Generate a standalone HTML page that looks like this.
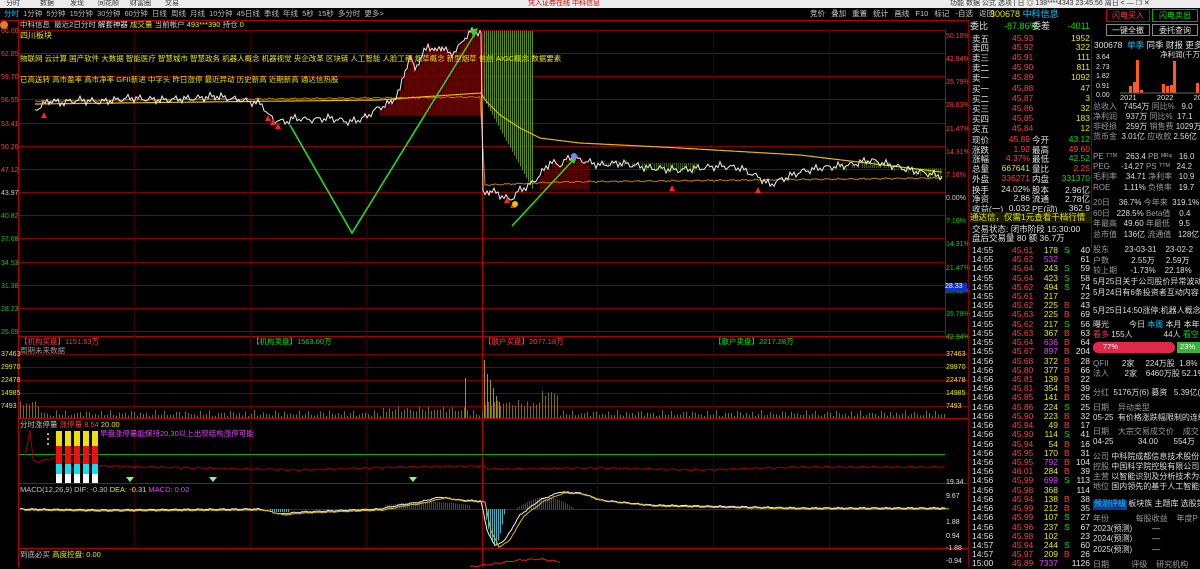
<!DOCTYPE html>
<html><head><meta charset="utf-8">
<style>
*{margin:0;padding:0;box-sizing:border-box}
body{width:1200px;height:567px;overflow:hidden;background:#000;font-family:"Liberation Sans","Noto Sans CJK SC",sans-serif;font-size:8px;color:#c0c0c0;position:relative}
.a{position:absolute;white-space:nowrap;line-height:1}
.r{color:#ff3b3b}.g{color:#00e000}.y{color:#e8e800}.w{color:#e0e0e0}.p{color:#e040fb}.c{color:#00c8ff}.gr{color:#9a9a9a}
#top{position:absolute;left:0;top:0;width:1200px;height:8px;background:#ececec;color:#333;font-size:7px}
.tr{position:absolute;left:972px;width:118px;height:9px;font-size:8.5px}
.tr span{position:absolute;top:0}
</style></head><body>
<div id="top">
<span class="a" style="left:6px;top:0">分时</span><span class="a" style="left:40px;top:0">数据</span><span class="a" style="left:70px;top:0">发现</span><span class="a" style="left:98px;top:0">同花顺</span><span class="a" style="left:130px;top:0">财富圈</span><span class="a" style="left:165px;top:0">交易</span>
<span class="a" style="left:528px;top:0;color:#d00">凭入证券在线 中科信息</span>
<span class="a" style="left:950px;top:0">功能 数据 公式 选项 | 日 ◎ 138****4343 23:45:56 周日 &lt; — ❐ ✕</span>
</div>
<div class="a" style="left:4px;top:10px;font-size:7.5px;color:#bbb;word-spacing:2px"><span class="c">分时</span> 1分钟 5分钟 15分钟 30分钟 60分钟 日线 周线 月线 10分钟 45日线 季线 年线 5秒 15秒 多分时 更多&gt;</div>
<div class="a" style="left:810px;top:10px;font-size:7.5px;color:#ccc;word-spacing:4px">竞价 叠加 重置 统计 画线 F10 标记 -自选 返回</div>
<div class="a" style="left:20px;top:21px;font-size:7.5px;color:#ccc">中科信息 &nbsp;最近2日分时 <span class="w">解套神器</span> <span class="y">成交量</span> 当前帐户 <span class="y">493***390</span> 持仓 <span class="y">0</span></div>
<div class="a" style="left:0;top:21px;width:8px;height:8px;border-radius:4px;background:#e08020"></div>

<svg id="ch" width="968" height="567" style="position:absolute;left:0;top:0">
<g id="grid"></g>
<g id="fill"></g>
<g id="lines"></g>
</svg>

<div class="a y" style="left:20px;top:32px">四川板块</div>
<div class="a y" style="left:20px;top:55px;font-size:7.5px">物联网 云计算 国产软件 大数据 智能医疗 智慧城市 智慧政务 机器人概念 机器视觉 央企改革 区块链 人工智能 人脸工程 烟草概念 新型烟草 信创 AIGC概念 数据要素</div>
<div class="a y" style="left:20px;top:76px;font-size:7.5px">已高送转 高市盈率 高市净率 GFII新进 中字头 昨日涨停 最近异动 历史新高 近期新高 通达信热股</div>
<div class="a r" style="left:20px;top:338px;font-size:7.5px">【机构买盘】1151.53万</div>
<div class="a gr" style="left:20px;top:347px;font-size:7.5px">周期未来数据</div>
<div class="a g" style="left:252px;top:338px;font-size:7.5px">【机构卖盘】1563.00万</div>
<div class="a r" style="left:484px;top:338px;font-size:7.5px">【散户买盘】2077.18万</div>
<div class="a g" style="left:714px;top:338px;font-size:7.5px">【散户卖盘】2217.28万</div>
<div class="a" style="left:20px;top:421px;font-size:7.5px">分时涨停量 <span class="r">涨停量</span> <span class="r">8.54</span> <span class="y">20.00</span></div>
<div class="a p" style="left:100px;top:430px;font-size:7.5px">早盘涨停量能保持20,30以上出现结构涨停可能</div>
<div class="a" style="left:20px;top:486px;font-size:7.5px">MACD(12,26,9) DIF: -0.30 <span class="y">DEA: -0.31</span> <span class="p">MACD: 0.02</span></div>
<div class="a" style="left:20px;top:551px;font-size:7.5px">到底必买 <span class="y">高度控盘: 0.00</span></div>
<div id="axl"></div>

<div class="a" style="left:990px;top:10px;font-size:9px"><span class="y">300678</span> <span class="c">中科信息</span></div>
<div class="a r" style="left:1106px;top:9px;width:44px;height:13px;border:1px solid #c00;text-align:center;padding-top:2px">闪电买入</div>
<div class="a g" style="left:1152px;top:9px;width:46px;height:13px;border:1px solid #0a0;text-align:center;padding-top:2px">闪电卖出</div>
<div class="a w" style="left:1106px;top:24px;width:44px;height:12px;border:1px solid #888;text-align:center;padding-top:2px">一键全撤</div>
<div class="a w" style="left:1152px;top:24px;width:46px;height:12px;border:1px solid #888;text-align:center;padding-top:2px">委托查询</div>

<div style="position:absolute;left:968px;top:20px;width:1px;height:547px;background:#800"></div>
<div style="position:absolute;left:1091px;top:38px;width:1px;height:210px;background:#800"></div>

<div class="a w" style="left:1094px;top:41px;font-size:8.5px">300678 &nbsp;<span class="c">单季</span> 同季 财报 更多</div>
<div class="a w" style="left:1160px;top:51px;font-size:7.5px">净利润(千万)</div>
<div class="a w" style="left:1096px;top:53px;font-size:7px;line-height:9.6px">3.64<br>2.73<br>1.82<br>0.91<br>0.00</div>
<svg style="position:absolute;left:1092px;top:56px" width="108" height="40">
<rect x="37" y="30" width="3" height="7" fill="#ff5a1a"/><rect x="41" y="26" width="3" height="11" fill="#ff5a1a"/><rect x="44" y="4" width="3" height="33" fill="#ff5a1a"/><rect x="48" y="34" width="3" height="3" fill="#ff5a1a"/>
<rect x="70" y="28" width="3" height="9" fill="#ff5a1a"/><rect x="74" y="30" width="3" height="7" fill="#ff5a1a"/><rect x="78" y="29" width="3" height="8" fill="#ff5a1a"/><rect x="81" y="5" width="3" height="32" fill="#ff5a1a"/>
<rect x="104" y="27" width="3" height="10" fill="#ff5a1a"/><line x1="28" y1="37" x2="108" y2="37" stroke="#666"/></svg>
<div class="a w" style="left:1120px;top:94px;font-size:7.5px;word-spacing:18px">2021 2022 2023</div>
<div class="a" style="left:1093px;top:342px;width:82px;height:11px;background:#e0284a;border-radius:5px;color:#fff;font-size:7.5px;padding:1px 0 0 10px">77%</div>
<div class="a" style="left:1177px;top:342px;width:23px;height:11px;background:#3bb33b;color:#fff;font-size:7.5px;padding:1px 0 0 3px">23%</div>
<div class="a" style="left:1093px;top:500px;width:34px;height:10px;background:#123a8a"></div>
<script>
var s='http://www.w3.org/2000/svg';
function el(p,t,a){var e=document.createElementNS(s,t);for(var k in a)e.setAttribute(k,a[k]);p.appendChild(e);return e}
var G=document.getElementById('grid'),F=document.getElementById('fill'),L=document.getElementById('lines');
var hs=[];for(var i=0;i<14;i++)hs.push(Math.round(30+i*23.15)+0.5);
hs.forEach(function(y){el(G,'line',{x1:18,y1:y,x2:945,y2:y,stroke:'#8a0000','stroke-width':1})});
[336,354,367,380,393,406,418,483,548].forEach(function(y){el(G,'line',{x1:18,y1:y+0.5,x2:968,y2:y+0.5,stroke:y==336||y==418||y==483||y==548?'#b00000':'#7a0000'})});
el(G,'line',{x1:0,y1:20.5,x2:968,y2:20.5,stroke:'#b00000'});
[134,250,366,597,713,829].forEach(function(x){el(G,'line',{x1:x+0.5,y1:30,x2:x+0.5,y2:548,stroke:'#3a0000'})});
el(G,'line',{x1:18.5,y1:20,x2:18.5,y2:567,stroke:'#b00000'});el(G,'line',{x1:482.5,y1:30,x2:482.5,y2:567,stroke:'#b00000'});el(G,'line',{x1:945.5,y1:30,x2:945.5,y2:336,stroke:'#b00000'});
var lv=['66.00','62.85','59.70','56.55','53.41','50.26','47.12','43.97','40.82','37.68','34.53','31.38','28.23','25.09'];
var rv=['50.10%','42.94%','35.79%','28.63%','21.47%','14.31%','7.16%','0.00%','7.16%','14.31%','21.47%','28.63%','35.79%','42.94%'];
var ax=document.getElementById('axl'),h='';
for(i=0;i<14;i++){var c=i<7?'#ff3b3b':(i==7?'#ccc':'#00d000');h+='<div class="a" style="left:1px;top:'+(hs[i]-3)+'px;font-size:7px;color:'+c+'">'+lv[i]+'</div><div class="a" style="left:946px;top:'+(hs[i]+2)+'px;font-size:7px;color:'+c+'">'+rv[i]+'</div>';}
var vl=[['37463',354],['29970',367],['22478',380],['14985',393],['7493',406]];
vl.forEach(function(v){h+='<div class="a y" style="left:1px;top:'+(v[1]-3)+'px;font-size:7px">'+v[0]+'</div><div class="a y" style="left:946px;top:'+(v[1]-3)+'px;font-size:7px">'+v[0]+'</div>'});
h+='<div class="a w" style="left:946px;top:479px;font-size:7px">19.34</div><div class="a w" style="left:946px;top:493px;font-size:7px">9.67</div><div class="a w" style="left:946px;top:519px;font-size:7px">1.88</div><div class="a w" style="left:946px;top:533px;font-size:7px">0.94</div><div class="a w" style="left:946px;top:558px;font-size:7px">-0.94</div><div class="a w" style="left:946px;top:545px;font-size:7px">-1.88</div><div class="a" style="left:945px;top:283px;width:22px;height:9px;background:#1030d0;color:#fff;font-size:7px">28.33</div>';
ax.innerHTML=h;
var P=[[35,110],[50,100],[60,103],[80,100],[100,102],[130,98],[160,100],[200,98],[215,96],[240,100],[262,104],[268,115],[275,120],[285,122],[295,118],[310,120],[330,118],[350,122],[365,118],[375,110],[385,105],[392,102],[400,90],[405,70],[410,58],[415,68],[420,60],[428,45],[435,52],[442,46],[450,55],[458,48],[465,38],[470,32],[481,32],[483,195],[490,190],[500,195],[510,200],[520,190],[530,185],[540,175],[550,162],[560,165],[570,157],[580,160],[600,165],[620,163],[650,168],[680,170],[700,168],[720,166],[740,168],[760,178],[770,185],[780,180],[800,172],[820,168],[850,165],[870,160],[890,165],[910,170],[930,174],[942,176]];
function interp(pts,jit){var o=[];for(var k=0;k<pts.length-1;k++){var a=pts[k],b=pts[k+1];for(var x=a[0];x<b[0];x+=2){var t=(x-a[0])/(b[0]-a[0]);o.push([x,a[1]+(b[1]-a[1])*t+(jit?Math.sin(x*1.7)*jit+Math.sin(x*0.53)*jit:0)])}}o.push(pts[pts.length-1]);return o}
var pp=interp(P,2.2);
var A=[[35,104],[200,102],[380,100],[420,97],[481,93],[485,100],[500,115],[520,128],[540,138],[580,143],[680,148],[800,155],[942,172]];
var ap=interp(A,0);
function yAt(arr,x){for(var k=0;k<arr.length-1;k++)if(arr[k+1][0]>=x)return arr[k][1];return arr[arr.length-1][1]}
for(var x=380;x<481;x+=2){var py=yAt(pp,x);el(F,'line',{x1:x+.5,y1:py,x2:x+.5,y2:Math.max(py,116),stroke:'#6a0000'})}
for(x=484;x<533;x+=2){var y2=100+(x-484)*1.85;el(F,'line',{x1:x+.5,y1:31,x2:x+.5,y2:y2,stroke:'#5e8a00'})}
for(x=540;x<590;x+=2){el(F,'line',{x1:x+.5,y1:yAt(pp,x),x2:x+.5,y2:190,stroke:'#5a0000'})}
for(x=600;x<700;x+=2){el(F,'line',{x1:x+.5,y1:163,x2:x+.5,y2:yAt(pp,x),stroke:'#3a5a00'})}
for(x=840;x<942;x+=2){el(F,'line',{x1:x+.5,y1:168,x2:x+.5,y2:yAt(pp,x)+2,stroke:'#3a5a00'})}
function pl(arr,c,w){el(L,'polyline',{points:arr.map(function(p){return p[0]+','+p[1].toFixed(1)}).join(' '),fill:'none',stroke:c,'stroke-width':w||1})}
pl(interp([[35,101],[480,97],[485,185],[560,182],[942,178]],0.5),'#c08000',1);
pl(ap,'#e0c000',1.2);
pl(pp,'#f0f0f0',1);
pl([[290,125],[352,233],[476,32]],'#22dd22',1.6);
pl([[512,226],[575,158]],'#22dd22',1.6);
el(L,'polygon',{points:'470,30 478,28 474,38',fill:'#22dd22'});el(L,'polygon',{points:'570,160 578,155 574,164',fill:'#22dd22'});
[[44,115],[268,118],[273,122],[278,126],[672,188],[758,190],[507,200],[513,205]].forEach(function(p){el(L,'polygon',{points:(p[0]-3)+','+(p[1]+3)+' '+(p[0]+3)+','+(p[1]+3)+' '+p[0]+','+(p[1]-3),fill:'#ff2020'})});
el(L,'circle',{cx:515,cy:204,r:3,fill:'#e8c000'});el(L,'circle',{cx:574,cy:156,r:3,fill:'#8080ff'});
for(x=20;x<945;x+=3){var hh=2+Math.abs(Math.sin(x*0.7)*3+Math.sin(x*0.13)*3);if(x<40)hh+=10;if(x>380&&x<470)hh+=4;if(x>484&&x<560)hh+=10;if(x>540&&x<560)hh+=10;el(L,'line',{x1:x+.5,y1:418,x2:x+.5,y2:418-hh,stroke:'#7a7000'})}
[[465,40],[484,58],[487,44],[490,38],[493,30],[496,22],[499,16]].forEach(function(v){el(L,'line',{x1:v[0]+.5,y1:418,x2:v[0]+.5,y2:418-v[1],stroke:'#a09a00'})});
el(L,'line',{x1:19,y1:454.5,x2:945,y2:454.5,stroke:'#00b000'});
pl(interp([[25,455],[30,430],[33,460],[36,462],[45,460],[55,458],[100,466],[200,468],[300,470],[400,467],[482,466],[490,469],[600,468],[700,470],[800,467],[945,467]],0.6),'#a00000',1);
for(var k=0;k<5;k++){var bx=56+k*9;el(L,'rect',{x:bx,y:431,width:6,height:15,fill:'#f0e000'});el(L,'rect',{x:bx,y:446,width:6,height:18,fill:'#ee1010'});el(L,'rect',{x:bx,y:464,width:6,height:10,fill:'#10e0f0'});el(L,'rect',{x:bx,y:474,width:6,height:9,fill:'#fff'})}
[[48,434],[48,439],[48,444]].forEach(function(p){el(L,'circle',{cx:p[0],cy:p[1],r:1,fill:'#ff0'})});
[130,213,413].forEach(function(x){el(L,'polygon',{points:(x-4)+',477 '+(x+4)+',477 '+x+',482',fill:'#80ff80'})});
el(L,'line',{x1:19,y1:509.5,x2:945,y2:509.5,stroke:'#303030'});
for(x=270;x<290;x+=2)el(L,'line',{x1:x+.5,y1:509,x2:x+.5,y2:512,stroke:'#40b0c0'});
for(x=385;x<470;x+=2)el(L,'line',{x1:x+.5,y1:509,x2:x+.5,y2:505-Math.sin((x-385)/85*3.14)*3,stroke:'#a02020'});
for(x=484;x<505;x+=2)el(L,'line',{x1:x+.5,y1:509,x2:x+.5,y2:509+Math.sin((x-484)/21*3.14)*36,stroke:'#40b0c0'});
for(x=515;x<575;x+=2)el(L,'line',{x1:x+.5,y1:509,x2:x+.5,y2:509-Math.sin((x-515)/60*3.14)*12,stroke:'#a02020'});
var M=[[20,509],[100,510],[260,509],[280,514],[300,512],[380,509],[400,505],[420,502],[440,497],[460,500],[481,501],[487,530],[495,546],[505,540],[520,515],[540,500],[560,492],[580,493],[600,500],[650,505],[700,506],[800,508],[945,508]];
pl(interp(M,0.4),'#f0f0f0',1);pl(interp(M.map(function(p){return [p[0]+4,p[1]+1]}),0.3),'#e0c000',1);
pl(interp([[470,567],[500,563],[520,560],[540,559],[560,562]],0.6),'#e02020',1);
</script>

<div class="a" style="left:970px;top:22px;font-size:9px;width:120px"><span class="w">委比</span><span class="g" style="position:absolute;left:34px">-87.86%</span><span class="w" style="position:absolute;left:62px">委差</span><span class="g" style="position:absolute;right:0">-4011</span></div>

<div style="font-size:8.5px">
<div class="tr" style="top:33px"><span class="w">卖五</span><span class="r" style="left:40px">45.93</span><span class="y" style="right:0">1952</span></div>
<div class="tr" style="top:42px"><span class="w">卖四</span><span class="r" style="left:40px">45.92</span><span class="y" style="right:0">322</span></div>
<div class="tr" style="top:52px"><span class="w">卖三</span><span class="r" style="left:40px">45.91</span><span class="y" style="right:0">111</span></div>
<div class="tr" style="top:62px"><span class="w">卖二</span><span class="r" style="left:40px">45.90</span><span class="y" style="right:0">811</span></div>
<div class="tr" style="top:72px"><span class="w">卖一</span><span class="r" style="left:40px">45.89</span><span class="y" style="right:0">1092</span></div>
<div class="tr" style="top:83px"><span class="w">买一</span><span class="r" style="left:40px">45.88</span><span class="y" style="right:0">47</span></div>
<div class="tr" style="top:93px"><span class="w">买二</span><span class="r" style="left:40px">45.87</span><span class="y" style="right:0">3</span></div>
<div class="tr" style="top:103px"><span class="w">买三</span><span class="r" style="left:40px">45.86</span><span class="y" style="right:0">32</span></div>
<div class="tr" style="top:113px"><span class="w">买四</span><span class="r" style="left:40px">45.85</span><span class="y" style="right:0">183</span></div>
<div class="tr" style="top:123px"><span class="w">买五</span><span class="r" style="left:40px">45.84</span><span class="y" style="right:0">12</span></div>
<div class="tr" style="top:134px"><span class="w">现价</span><span class="r" style="right:60px">45.89</span><span class="w" style="left:60px">今开</span><span class="g" style="right:0">43.12</span></div>
<div class="tr" style="top:144px"><span class="w">涨跌</span><span class="r" style="right:60px">1.92</span><span class="w" style="left:60px">最高</span><span class="r" style="right:0">49.60</span></div>
<div class="tr" style="top:153px"><span class="w">涨幅</span><span class="r" style="right:60px">4.37%</span><span class="w" style="left:60px">最低</span><span class="g" style="right:0">42.52</span></div>
<div class="tr" style="top:163px"><span class="w">总量</span><span class="y" style="right:60px">667641</span><span class="w" style="left:60px">量比</span><span class="r" style="right:0">2.25</span></div>
<div class="tr" style="top:173px"><span class="w">外盘</span><span class="r" style="right:60px">336271</span><span class="w" style="left:60px">内盘</span><span class="g" style="right:0">331370</span></div>
<div class="tr" style="top:184px"><span class="w">换手</span><span class="w" style="right:60px">24.02%</span><span class="w" style="left:60px">股本</span><span class="w" style="right:0">2.96亿</span></div>
<div class="tr" style="top:193px"><span class="w">净资</span><span class="w" style="right:60px">2.86</span><span class="w" style="left:60px">流通</span><span class="w" style="right:0">2.78亿</span></div>
<div class="tr" style="top:203px"><span class="w">收益(一)</span><span class="w" style="right:60px">0.032</span><span class="w" style="left:60px">PE(动)</span><span class="w" style="right:0">362.9</span></div>
<div class="a y" style="left:970px;top:212px;width:121px;height:11px;background:#1c1c00;font-size:8.5px;padding-top:1px">通达信，仅需1元查看千档行情</div>
<div class="a w" style="left:972px;top:225px;font-size:8.5px">交易状态: 闭市阶段 15:30:00</div>
<div class="a w" style="left:972px;top:234px;font-size:8.5px">盘后交易量 80 额 36.7万</div>
</div>

<div id="ticks" style="font-size:8px">
<div class="tr" style="top:245px"><span class="w">14:55</span><span class="r" style="left:40px">45.61</span><span class="y" style="right:32px">178</span><span class="g" style="left:92px">S</span><span class="w" style="right:0">40</span></div>
<div class="tr" style="top:254px"><span class="w">14:55</span><span class="r" style="left:40px">45.62</span><span class="p" style="right:32px">532</span><span class="w" style="right:0">61</span></div>
<div class="tr" style="top:263px"><span class="w">14:55</span><span class="r" style="left:40px">45.64</span><span class="y" style="right:32px">243</span><span class="g" style="left:92px">S</span><span class="w" style="right:0">59</span></div>
<div class="tr" style="top:273px"><span class="w">14:55</span><span class="r" style="left:40px">45.64</span><span class="y" style="right:32px">423</span><span class="g" style="left:92px">S</span><span class="w" style="right:0">58</span></div>
<div class="tr" style="top:282px"><span class="w">14:55</span><span class="r" style="left:40px">45.62</span><span class="y" style="right:32px">494</span><span class="g" style="left:92px">S</span><span class="w" style="right:0">74</span></div>
<div class="tr" style="top:291px"><span class="w">14:55</span><span class="r" style="left:40px">45.61</span><span class="y" style="right:32px">217</span><span class="w" style="right:0">22</span></div>
<div class="tr" style="top:300px"><span class="w">14:55</span><span class="r" style="left:40px">45.62</span><span class="y" style="right:32px">225</span><span class="r" style="left:92px">B</span><span class="w" style="right:0">43</span></div>
<div class="tr" style="top:309px"><span class="w">14:55</span><span class="r" style="left:40px">45.63</span><span class="y" style="right:32px">225</span><span class="r" style="left:92px">B</span><span class="w" style="right:0">69</span></div>
<div class="tr" style="top:319px"><span class="w">14:55</span><span class="r" style="left:40px">45.62</span><span class="y" style="right:32px">217</span><span class="g" style="left:92px">S</span><span class="w" style="right:0">56</span></div>
<div class="tr" style="top:328px"><span class="w">14:55</span><span class="r" style="left:40px">45.63</span><span class="y" style="right:32px">367</span><span class="r" style="left:92px">B</span><span class="w" style="right:0">63</span></div>
<div class="tr" style="top:337px"><span class="w">14:55</span><span class="r" style="left:40px">45.64</span><span class="p" style="right:32px">636</span><span class="r" style="left:92px">B</span><span class="w" style="right:0">64</span></div>
<div class="tr" style="top:346px"><span class="w">14:55</span><span class="r" style="left:40px">45.67</span><span class="p" style="right:32px">897</span><span class="r" style="left:92px">B</span><span class="w" style="right:0">204</span></div>
<div class="tr" style="top:356px"><span class="w">14:56</span><span class="r" style="left:40px">45.68</span><span class="y" style="right:32px">372</span><span class="r" style="left:92px">B</span><span class="w" style="right:0">28</span></div>
<div class="tr" style="top:365px"><span class="w">14:56</span><span class="r" style="left:40px">45.80</span><span class="y" style="right:32px">377</span><span class="r" style="left:92px">B</span><span class="w" style="right:0">66</span></div>
<div class="tr" style="top:374px"><span class="w">14:56</span><span class="r" style="left:40px">45.81</span><span class="y" style="right:32px">139</span><span class="r" style="left:92px">B</span><span class="w" style="right:0">22</span></div>
<div class="tr" style="top:383px"><span class="w">14:56</span><span class="r" style="left:40px">45.81</span><span class="y" style="right:32px">354</span><span class="r" style="left:92px">B</span><span class="w" style="right:0">39</span></div>
<div class="tr" style="top:392px"><span class="w">14:56</span><span class="r" style="left:40px">45.85</span><span class="y" style="right:32px">141</span><span class="r" style="left:92px">B</span><span class="w" style="right:0">26</span></div>
<div class="tr" style="top:402px"><span class="w">14:56</span><span class="r" style="left:40px">45.86</span><span class="y" style="right:32px">224</span><span class="g" style="left:92px">S</span><span class="w" style="right:0">25</span></div>
<div class="tr" style="top:411px"><span class="w">14:56</span><span class="r" style="left:40px">45.90</span><span class="y" style="right:32px">223</span><span class="r" style="left:92px">B</span><span class="w" style="right:0">32</span></div>
<div class="tr" style="top:420px"><span class="w">14:56</span><span class="r" style="left:40px">45.94</span><span class="y" style="right:32px">49</span><span class="r" style="left:92px">B</span><span class="w" style="right:0">17</span></div>
<div class="tr" style="top:429px"><span class="w">14:56</span><span class="r" style="left:40px">45.90</span><span class="y" style="right:32px">114</span><span class="g" style="left:92px">S</span><span class="w" style="right:0">41</span></div>
<div class="tr" style="top:439px"><span class="w">14:56</span><span class="r" style="left:40px">45.94</span><span class="y" style="right:32px">54</span><span class="r" style="left:92px">B</span><span class="w" style="right:0">16</span></div>
<div class="tr" style="top:448px"><span class="w">14:56</span><span class="r" style="left:40px">45.95</span><span class="y" style="right:32px">170</span><span class="r" style="left:92px">B</span><span class="w" style="right:0">31</span></div>
<div class="tr" style="top:457px"><span class="w">14:56</span><span class="r" style="left:40px">45.95</span><span class="p" style="right:32px">792</span><span class="r" style="left:92px">B</span><span class="w" style="right:0">104</span></div>
<div class="tr" style="top:466px"><span class="w">14:56</span><span class="r" style="left:40px">46.01</span><span class="y" style="right:32px">284</span><span class="r" style="left:92px">B</span><span class="w" style="right:0">39</span></div>
<div class="tr" style="top:475px"><span class="w">14:56</span><span class="r" style="left:40px">45.99</span><span class="p" style="right:32px">699</span><span class="g" style="left:92px">S</span><span class="w" style="right:0">113</span></div>
<div class="tr" style="top:485px"><span class="w">14:56</span><span class="r" style="left:40px">45.98</span><span class="y" style="right:32px">368</span><span class="w" style="right:0">114</span></div>
<div class="tr" style="top:494px"><span class="w">14:56</span><span class="r" style="left:40px">45.94</span><span class="y" style="right:32px">138</span><span class="r" style="left:92px">B</span><span class="w" style="right:0">38</span></div>
<div class="tr" style="top:503px"><span class="w">14:56</span><span class="r" style="left:40px">45.99</span><span class="y" style="right:32px">212</span><span class="r" style="left:92px">B</span><span class="w" style="right:0">35</span></div>
<div class="tr" style="top:512px"><span class="w">14:56</span><span class="r" style="left:40px">45.99</span><span class="y" style="right:32px">107</span><span class="g" style="left:92px">S</span><span class="w" style="right:0">27</span></div>
<div class="tr" style="top:522px"><span class="w">14:56</span><span class="r" style="left:40px">45.96</span><span class="y" style="right:32px">237</span><span class="g" style="left:92px">S</span><span class="w" style="right:0">67</span></div>
<div class="tr" style="top:531px"><span class="w">14:56</span><span class="r" style="left:40px">45.98</span><span class="y" style="right:32px">102</span><span class="w" style="right:0">23</span></div>
<div class="tr" style="top:540px"><span class="w">14:57</span><span class="r" style="left:40px">45.94</span><span class="y" style="right:32px">244</span><span class="g" style="left:92px">S</span><span class="w" style="right:0">60</span></div>
<div class="tr" style="top:549px"><span class="w">14:57</span><span class="r" style="left:40px">45.97</span><span class="y" style="right:32px">209</span><span class="r" style="left:92px">B</span><span class="w" style="right:0">26</span></div>
<div class="tr" style="top:558px"><span class="w">15:00</span><span class="r" style="left:40px">45.89</span><span class="p" style="right:32px">7337</span><span class="w" style="right:0">1126</span></div>
</div>

<div style="font-size:8px;color:#ddd">
<div class="a" style="left:1093px;top:103px"><span class="gr">总收入</span> &nbsp;&nbsp;7454万 <span class="gr">同比%</span> &nbsp;&nbsp;9.0</div>
<div class="a" style="left:1093px;top:113px"><span class="gr">净利润</span> &nbsp;&nbsp;&nbsp;937万 <span class="gr">同比%</span> &nbsp;17.1</div>
<div class="a" style="left:1093px;top:123px"><span class="gr">非经损</span> &nbsp;&nbsp;&nbsp;259万 <span class="gr">销售费</span> 1029万</div>
<div class="a" style="left:1093px;top:133px"><span class="gr">货币金</span> &nbsp;3.01亿 <span class="gr">应收款</span> 2.56亿</div>
<div class="a" style="left:1093px;top:153px"><span class="gr">PE ᵀᵀᴹ</span> &nbsp;&nbsp;&nbsp;263.4 <span class="gr">PB ᴹᴿᵠ</span> &nbsp;&nbsp;16.0</div>
<div class="a" style="left:1093px;top:163px"><span class="gr">PEG</span> &nbsp;&nbsp;&nbsp;&nbsp;-14.27 <span class="gr">PS ᵀᵀᴹ</span> &nbsp;&nbsp;24.2</div>
<div class="a" style="left:1093px;top:173px"><span class="gr">毛利率</span> &nbsp;&nbsp;&nbsp;34.71 <span class="gr">净利率</span> &nbsp;&nbsp;10.9</div>
<div class="a" style="left:1093px;top:184px"><span class="gr">ROE</span> &nbsp;&nbsp;&nbsp;&nbsp;&nbsp;1.11% <span class="gr">负债率</span> &nbsp;&nbsp;19.7</div>
<div class="a" style="left:1093px;top:199px"><span class="gr">20日</span> &nbsp;&nbsp;&nbsp;36.7% <span class="gr">今年来</span> &nbsp;319.1%</div>
<div class="a" style="left:1093px;top:210px"><span class="gr">60日</span> &nbsp;&nbsp;228.5% <span class="gr">Beta值</span> &nbsp;&nbsp;&nbsp;0.4</div>
<div class="a" style="left:1093px;top:220px"><span class="gr">年最高</span> &nbsp;&nbsp;49.60 <span class="gr">年最低</span> &nbsp;&nbsp;&nbsp;9.5</div>
<div class="a" style="left:1093px;top:231px"><span class="gr">总市值</span> &nbsp;&nbsp;136亿 <span class="gr">流通值</span> &nbsp;&nbsp;128亿</div>
<div class="a" style="left:1093px;top:246px"><span class="gr">股东</span> &nbsp;&nbsp;&nbsp;&nbsp;&nbsp;&nbsp;23-03-31 &nbsp;&nbsp;&nbsp;23-02-2</div>
<div class="a" style="left:1093px;top:257px"><span class="gr">户数</span> &nbsp;&nbsp;&nbsp;&nbsp;&nbsp;&nbsp;&nbsp;&nbsp;&nbsp;2.55万 &nbsp;&nbsp;&nbsp;&nbsp;2.59万</div>
<div class="a" style="left:1093px;top:267px"><span class="gr">较上期</span> &nbsp;&nbsp;&nbsp;&nbsp;&nbsp;-1.73% &nbsp;&nbsp;&nbsp;22.18%</div>
<div class="a" style="left:1093px;top:278px">5月25日关于公司股价异常波动的</div>
<div class="a" style="left:1093px;top:289px">5月24日有6条投资者互动内容</div>
<div class="a" style="left:1093px;top:307px">5月25日14:50涨停:机器人概念&gt;</div>
<div class="a" style="left:1093px;top:321px">曝光 &nbsp;&nbsp;&nbsp;&nbsp;&nbsp;&nbsp;&nbsp;&nbsp;今日 <span class="c">本周</span> 本月 本年</div>
<div class="a" style="left:1093px;top:331px"><span class="r">看多</span> 155人 &nbsp;&nbsp;&nbsp;&nbsp;&nbsp;&nbsp;&nbsp;&nbsp;&nbsp;&nbsp;&nbsp;&nbsp;&nbsp;44人 <span class="g">看空</span></div>
<div class="a" style="left:1093px;top:360px"><span class="gr">QFII</span> &nbsp;&nbsp;&nbsp;&nbsp;&nbsp;2家 &nbsp;&nbsp;&nbsp;&nbsp;224万股 &nbsp;1.8%</div>
<div class="a" style="left:1093px;top:370px"><span class="gr">法人</span> &nbsp;&nbsp;&nbsp;&nbsp;&nbsp;&nbsp;2家 &nbsp;&nbsp;&nbsp;6460万股 52.1%</div>
<div class="a" style="left:1093px;top:389px"><span class="gr">分红</span> &nbsp;5176万(6) 募资 &nbsp;&nbsp;5.39亿(3</div>
<div class="a" style="left:1093px;top:404px"><span class="gr">日期 &nbsp;&nbsp;&nbsp;异动类型</span></div>
<div class="a" style="left:1093px;top:414px">05-25 &nbsp;有价格涨跌幅限制的连续</div>
<div class="a" style="left:1093px;top:428px"><span class="gr">日期 &nbsp;&nbsp;&nbsp;大宗交易成交价 &nbsp;&nbsp;&nbsp;成交</span></div>
<div class="a" style="left:1093px;top:438px">04-25 &nbsp;&nbsp;&nbsp;&nbsp;&nbsp;&nbsp;&nbsp;&nbsp;&nbsp;&nbsp;34.00 &nbsp;&nbsp;&nbsp;&nbsp;&nbsp;&nbsp;554万</div>
<div class="a" style="left:1093px;top:453px"><span class="gr">公司</span> 中科院成都信息技术股份有</div>
<div class="a" style="left:1093px;top:463px"><span class="gr">控股</span> 中国科学院控股有限公司</div>
<div class="a" style="left:1093px;top:473px"><span class="gr">主营</span> 以智能识别及分析技术为核</div>
<div class="a" style="left:1093px;top:483px"><span class="gr">地位</span> 国内领先的基于人工智能行</div>
<div class="a" style="left:1094px;top:500px"><span class="c">预测评级</span> 板块族 主题库 选股策略</div>
<div class="a" style="left:1093px;top:515px"><span class="gr">年份 &nbsp;&nbsp;&nbsp;&nbsp;&nbsp;&nbsp;&nbsp;&nbsp;&nbsp;&nbsp;&nbsp;每股收益 &nbsp;&nbsp;&nbsp;年度P</span></div>
<div class="a" style="left:1093px;top:525px">2023(预测) &nbsp;&nbsp;&nbsp;&nbsp;&nbsp;&nbsp;&nbsp;&nbsp;—</div>
<div class="a" style="left:1093px;top:535px">2024(预测) &nbsp;&nbsp;&nbsp;&nbsp;&nbsp;&nbsp;&nbsp;&nbsp;—</div>
<div class="a" style="left:1093px;top:546px">2025(预测) &nbsp;&nbsp;&nbsp;&nbsp;&nbsp;&nbsp;&nbsp;&nbsp;—</div>
<div class="a gr" style="left:1093px;top:561px">日期 &nbsp;&nbsp;&nbsp;&nbsp;&nbsp;&nbsp;&nbsp;&nbsp;&nbsp;评级 &nbsp;&nbsp;&nbsp;研究机构</div>
</div>
</body></html>
